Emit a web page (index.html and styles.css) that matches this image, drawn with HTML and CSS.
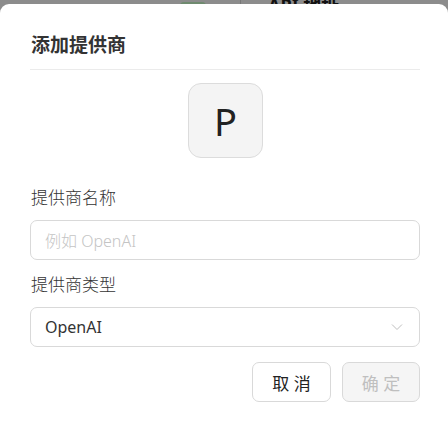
FILE: index.html
```html
<!DOCTYPE html>
<html lang="zh-CN">
<head>
    <meta charset="UTF-8">
    <meta name="viewport" content="width=device-width, initial-scale=1.0">
    <title>添加提供商</title>
    <link rel="stylesheet" href="styles.css">
</head>
<body>
    <div class="backdrop">
        <span class="behind-tag"></span>
        <span class="behind-line"></span>
        <span class="behind-text">API 地址</span>
    </div>

    <div class="dialog">
        <h2 class="dialog-title">添加提供商</h2>

        <div class="avatar-row">
            <div class="avatar">P</div>
        </div>

        <label class="field-label">提供商名称</label>
        <div class="input">
            <span class="placeholder">例如 OpenAI</span>
        </div>

        <label class="field-label">提供商类型</label>
        <div class="select">
            <span class="select-value">OpenAI</span>
            <svg class="chevron" width="12" height="8" viewBox="0 0 12 8">
                <path d="M1 1.5 L6 6.5 L11 1.5" fill="none" stroke="#bfbfbf" stroke-width="1"/>
            </svg>
        </div>

        <div class="actions">
            <button class="btn">取 消</button>
            <button class="btn btn-disabled">确 定</button>
        </div>
    </div>
</body>
</html>
```
FILE: styles.css
```css
html, body {
    margin: 0;
    padding: 0;
}
body {
    background: #8c8c8c;
    font-family: "Noto Sans", "Noto Sans CJK SC", sans-serif;
    color: #333;
    width: 448px;
    height: 424px;
    overflow: hidden;
    position: relative;
}
.backdrop {
    position: absolute;
    top: 0;
    left: 0;
    right: 0;
    height: 12px;
}
.behind-tag {
    position: absolute;
    left: 180px;
    top: 2px;
    width: 26px;
    height: 8px;
    border-radius: 4px;
    background: #6f8a6f;
}
.behind-line {
    position: absolute;
    left: 240px;
    top: 0;
    width: 1px;
    height: 6px;
    background: #777;
}
.behind-text {
    position: absolute;
    left: 268px;
    top: -9px;
    font-size: 18px;
    font-weight: bold;
    color: #111;
}
.dialog {
    position: relative;
    margin-top: 4px;
    background: #fff;
    border-radius: 9px 9px 0 0;
    height: 420px;
    padding: 0 28px 0 30px;
    box-sizing: border-box;
}
.dialog-title {
    margin: 0;
    padding: 29px 0 12px 1px;
    font-size: 19px;
    line-height: 24px;
    font-weight: bold;
    color: #333;
    border-bottom: 1px solid #ebebeb;
}
.avatar-row {
    display: flex;
    justify-content: center;
    padding: 13px 0 0 1px;
}
.avatar {
    width: 73px;
    height: 73px;
    border: 1px solid #dcdcdc;
    border-radius: 13px;
    background: #f4f4f4;
    display: flex;
    align-items: center;
    justify-content: center;
    font-size: 38px;
    color: #222;
    line-height: 1;
}
.field-label {
    display: block;
    font-size: 17px;
    font-weight: 300;
    line-height: 24px;
    margin: 10px 0 10px 1px;
    color: #333;
}
.avatar-row + .field-label {
    margin-top: 28px;
}
.input + .field-label {
    margin-top: 13px;
}
.input, .select {
    height: 38px;
    border: 1px solid #d9d9d9;
    border-radius: 7px;
    display: flex;
    align-items: center;
    padding: 0 14px;
}
.placeholder {
    font-size: 16px;
    font-weight: 300;
    color: #c4c4c4;
}
.select {
    justify-content: space-between;
}
.select-value {
    font-size: 16px;
    color: #333;
}
.chevron {
    margin-right: 2px;
}
.actions {
    display: flex;
    justify-content: flex-end;
    gap: 11px;
    margin-top: 15px;
}
.btn {
    width: 79px;
    height: 40px;
    border: 1px solid #d9d9d9;
    border-radius: 7px;
    background: #fff;
    font-family: inherit;
    font-size: 17px;
    color: #222;
    padding: 0;
}
.btn-disabled {
    background: #f5f5f5;
    color: #bfbfbf;
    width: 78px;
}
```
